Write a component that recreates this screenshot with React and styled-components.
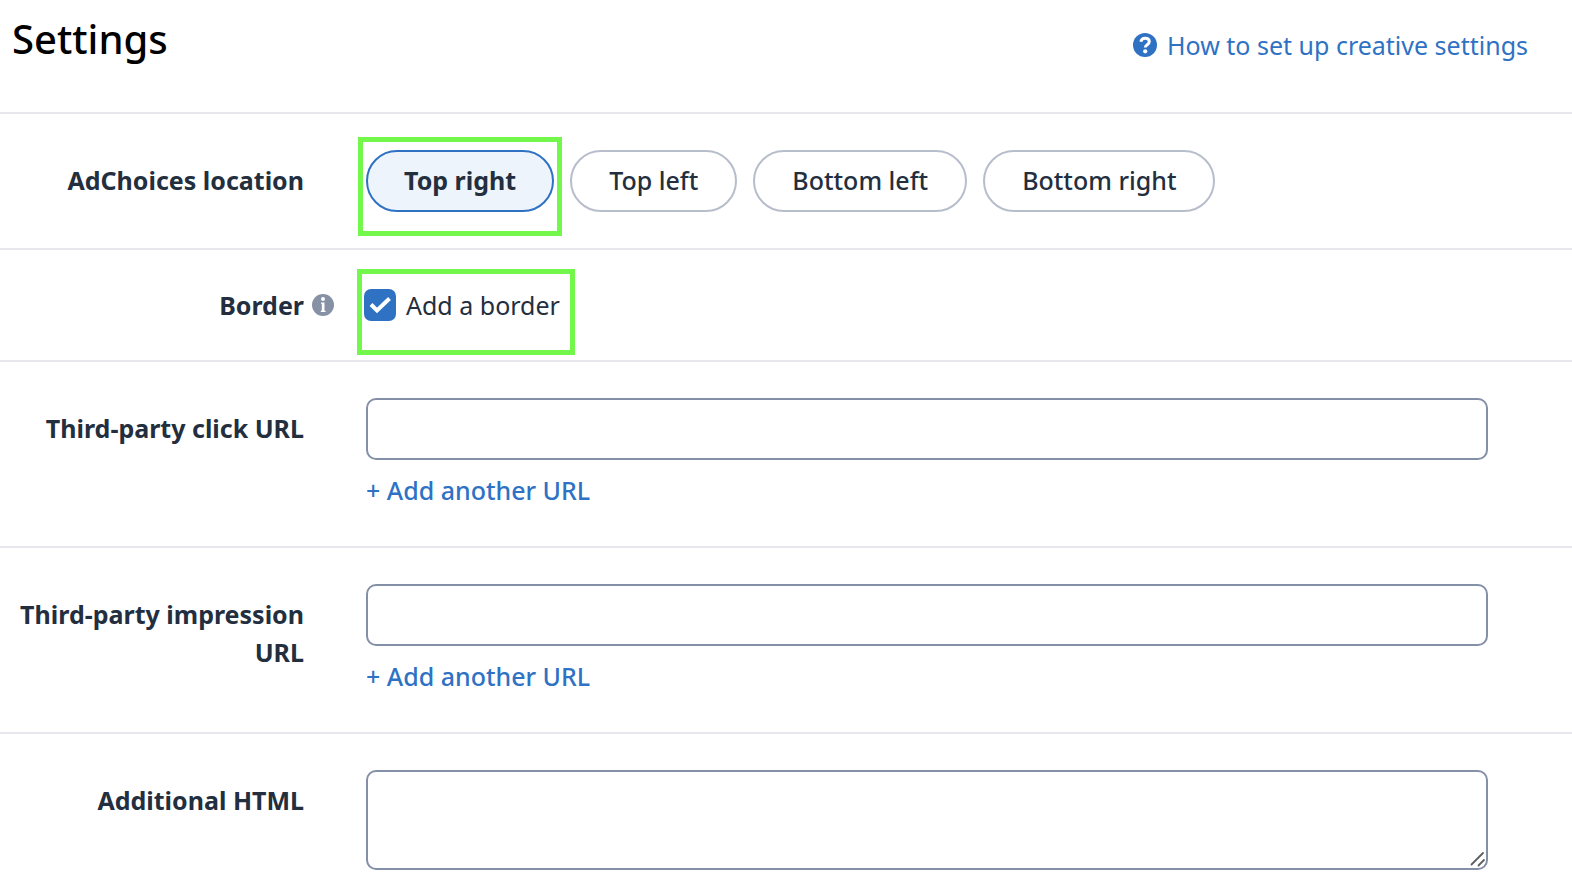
import { useState } from "react";
import styled, { createGlobalStyle } from "styled-components";

const GlobalStyle = createGlobalStyle`
  * {
    box-sizing: border-box;
  }

  body {
    margin: 0;
    background: #fff;
    color: #232f3e;
    font-family: "Noto Sans", "Open Sans", sans-serif;
    font-size: 25px;
    line-height: 38px;
  }

  button,
  input,
  textarea {
    font: inherit;
    color: inherit;
  }
`;

const Page = styled.main`
  width: 100%;
`;

const Header = styled.header`
  display: flex;
  justify-content: space-between;
  align-items: flex-start;
  min-height: 114px;
  padding: 11px 44px 0 12px;
  border-bottom: 2px solid #e7e8ee;
`;

const Title = styled.h1`
  margin: 0;
  color: #000;
  font-size: 40px;
  font-weight: 500;
  line-height: 56px;
`;

const HelpLink = styled.a`
  display: flex;
  align-items: center;
  gap: 10px;
  padding-top: 15px;
  color: #2f72c4;
  text-decoration: none;

  &:hover {
    text-decoration: underline;
  }
`;

const Row = styled.section`
  display: grid;
  grid-template-columns: 304px 62px minmax(0, 1fr);
  padding: 36px 84px 36px 0;
  border-bottom: 2px solid #e7e8ee;

  &:last-child {
    border-bottom: 0;
    padding-bottom: 24px;
  }
`;

const RowLabel = styled.label`
  padding: ${(props) => (props.$tall ? "11px" : "0")} 0 0 8px;
  font-weight: 700;
  text-align: right;
`;

const Hint = styled.span`
  display: flex;
  align-items: center;
  height: 38px;
  padding-left: 8px;
`;

const Pills = styled.div`
  display: flex;
  flex-wrap: wrap;
  gap: 16px;
`;

const Pill = styled.button`
  height: 62px;
  padding: 0 ${(props) => (props.$active ? "36px" : "37px")} 2px;
  border: 2px solid ${(props) => (props.$active ? "#2f72c4" : "#b7bdcb")};
  border-radius: 31px;
  background: ${(props) => (props.$active ? "#edf4fb" : "#fff")};
  font-weight: ${(props) => (props.$active ? 700 : 500)};
  cursor: pointer;
`;

const Highlight = styled.div`
  position: relative;
  width: fit-content;

  &::after {
    content: "";
    position: absolute;
    inset: ${(props) => props.$inset};
    border: 5px solid #74f74b;
    pointer-events: none;
  }
`;

const CheckLabel = styled.label`
  display: flex;
  align-items: center;
  gap: 10px;
  margin-left: -2px;
  cursor: pointer;
`;

const CheckBox = styled.span`
  display: grid;
  width: 32px;
  height: 32px;

  > * {
    grid-area: 1 / 1;
  }

  svg {
    pointer-events: none;
  }
`;

const CheckInput = styled.input`
  appearance: none;
  width: 32px;
  height: 32px;
  margin: 0;
  border: 2px solid #8490a6;
  border-radius: 7px;
  background: #fff;

  &:checked {
    border-color: #2f72c4;
    background: #2f72c4;
  }
`;

const Field = styled.div`
  display: flex;
  flex-direction: column;
  align-items: flex-start;
  gap: 11px;
`;

const TextInput = styled.input`
  display: block;
  width: 100%;
  height: 62px;
  padding: 0 16px;
  border: 2px solid #8490a8;
  border-radius: 10px;
  background: #fff;
`;

const AreaWrap = styled.div`
  position: relative;
  width: 100%;

  svg {
    position: absolute;
    right: 2px;
    bottom: 3px;
    pointer-events: none;
  }
`;

const TextArea = styled.textarea`
  display: block;
  width: 100%;
  height: 100px;
  padding: 10px 16px;
  border: 2px solid #8490a8;
  border-radius: 10px;
  background: #fff;
  resize: none;
`;

const AddButton = styled.button`
  padding: 0 0 1px;
  border: 0;
  background: none;
  color: #2f72c4;
  font-weight: 500;
  cursor: pointer;
`;

const HelpIcon = () => (
  <svg width="24" height="24" viewBox="0 0 24 24" aria-hidden="true">
    <circle cx="12" cy="12" r="12" fill="#2f72c4" />
    <path
      d="M7.800 8.800C8.300 6.500 10 5.200 12.100 5.200c2.500 0 4.200 1.400 4.200 3.500 0 3-4 2.900-4 5.700"
      fill="none"
      stroke="#fff"
      strokeWidth="3"
    />
    <circle cx="12.200" cy="18.300" r="2.100" fill="#fff" />
  </svg>
);

const InfoIcon = () => (
  <svg width="22" height="22" viewBox="0 0 22 22" aria-hidden="true">
    <circle cx="11" cy="11" r="11" fill="#8791a5" />
    <circle cx="11" cy="5" r="2" fill="#fff" />
    <path d="M9 8.500h3.500v8.300h1v1.200H8.800v-1.200h1V9.700H9z" fill="#fff" />
  </svg>
);

const CheckIcon = () => (
  <svg width="32" height="32" viewBox="0 0 32 32" aria-hidden="true">
    <path
      d="M7 15.500l6 6L25.500 9.500"
      fill="none"
      stroke="#fff"
      strokeWidth="4"
    />
  </svg>
);

const GripIcon = () => (
  <svg width="16" height="16" viewBox="0 0 16 16" aria-hidden="true">
    <path
      d="M1.500 13.500L13 2M8.500 14.500L14 9"
      fill="none"
      stroke="#5f5f5f"
      strokeWidth="1.800"
      strokeLinecap="round"
    />
  </svg>
);

const locations = ["Top right", "Top left", "Bottom left", "Bottom right"];

function LocationPills() {
  const [selected, setSelected] = useState(locations[0]);

  return (
    <Pills role="group" aria-labelledby="location-label">
      {locations.map((name) => {
        const pill = (
          <Pill
            key={name}
            type="button"
            $active={name === selected}
            aria-pressed={name === selected}
            onClick={() => setSelected(name)}
          >
            {name}
          </Pill>
        );

        return name === locations[0] ? (
          <Highlight key={name} $inset="-13px -8px -24px">
            {pill}
          </Highlight>
        ) : (
          pill
        );
      })}
    </Pills>
  );
}

function UrlRow({ id, label }) {
  const [count, setCount] = useState(1);

  return (
    <Row>
      <RowLabel htmlFor={id} $tall>
        {label}
      </RowLabel>
      <span />
      <Field>
        {Array.from({ length: count }, (_, i) => (
          <TextInput
            key={i}
            id={i === 0 ? id : `${id}-${i}`}
            type="url"
            aria-label={label}
          />
        ))}
        <AddButton type="button" onClick={() => setCount(count + 1)}>
          + Add another URL
        </AddButton>
      </Field>
    </Row>
  );
}

function App() {
  const [border, setBorder] = useState(true);

  return (
    <Page>
      <GlobalStyle />
      <Header>
        <Title>Settings</Title>
        <HelpLink href="#help">
          <HelpIcon />
          How to set up creative settings
        </HelpLink>
      </Header>

      <Row>
        <RowLabel as="span" id="location-label" $tall>
          AdChoices location
        </RowLabel>
        <span />
        <LocationPills />
      </Row>

      <Row>
        <RowLabel htmlFor="border">Border</RowLabel>
        <Hint>
          <InfoIcon />
        </Hint>
        <Highlight $inset="-17px -15px -31px -9px">
          <CheckLabel>
            <CheckBox>
              <CheckInput
                id="border"
                type="checkbox"
                checked={border}
                onChange={(e) => setBorder(e.target.checked)}
              />
              {border && <CheckIcon />}
            </CheckBox>
            Add a border
          </CheckLabel>
        </Highlight>
      </Row>

      <UrlRow id="click-url" label="Third-party click URL" />
      <UrlRow id="impression-url" label="Third-party impression URL" />

      <Row>
        <RowLabel htmlFor="html" $tall>
          Additional HTML
        </RowLabel>
        <span />
        <AreaWrap>
          <TextArea id="html" />
          <GripIcon />
        </AreaWrap>
      </Row>
    </Page>
  );
}

export default App;
